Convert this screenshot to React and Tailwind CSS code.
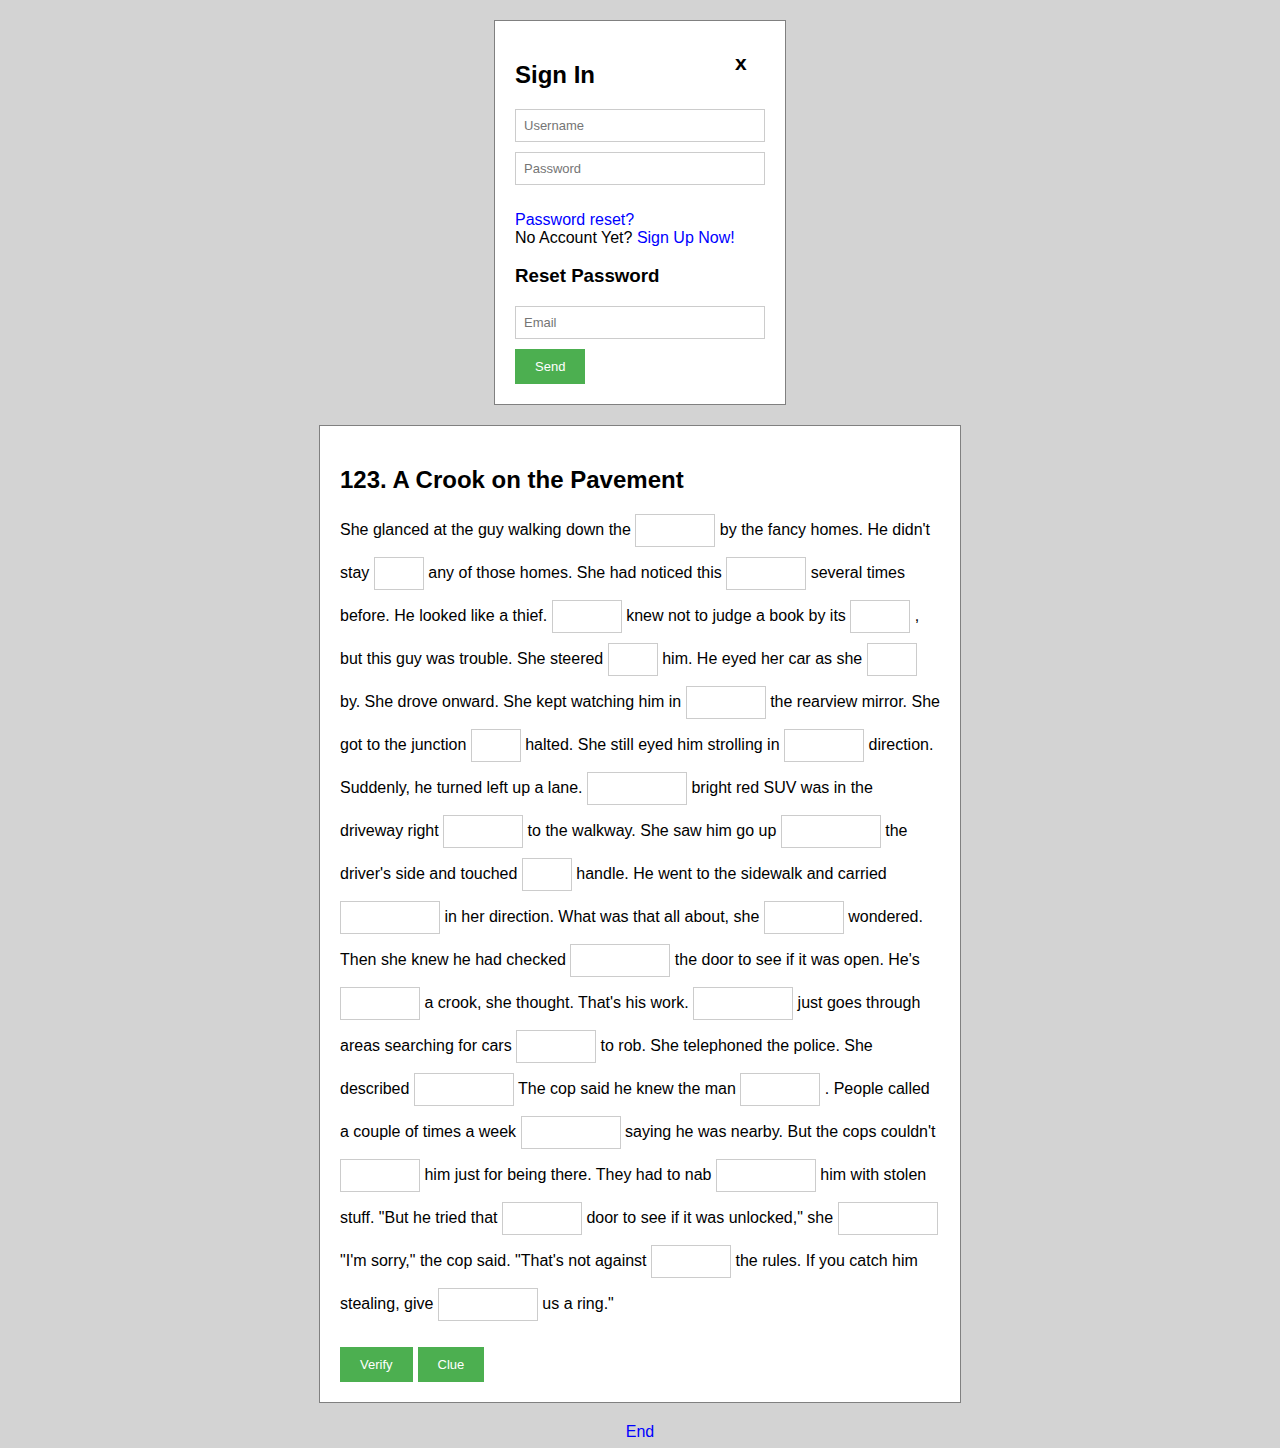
import { Fragment } from 'react';

// texto com lacunas: string = texto, número = largura do campo
const STORY = [
  'She glanced at the guy walking down the', 80,
  'by the fancy homes. He didn\'t stay', 50,
  'any of those homes. She had noticed this', 80,
  'several times before. He looked like a thief.', 70,
  'knew not to judge a book by its', 60,
  ', but this guy was trouble. She steered', 50,
  'him. He eyed her car as she', 50,
  'by. She drove onward. She kept watching him in', 80,
  'the rearview mirror. She got to the junction', 50,
  'halted. She still eyed him strolling in', 80,
  'direction. Suddenly, he turned left up a lane.', 100,
  'bright red SUV was in the driveway right', 80,
  'to the walkway. She saw him go up', 100,
  'the driver\'s side and touched', 50,
  'handle. He went to the sidewalk and carried', 100,
  'in her direction. What was that all about, she', 80,
  'wondered. Then she knew he had checked', 100,
  'the door to see if it was open. He\'s', 80,
  'a crook, she thought. That\'s his work.', 100,
  'just goes through areas searching for cars', 80,
  'to rob. She telephoned the police. She described', 100,
  'The cop said he knew the man', 80,
  '. People called a couple of times a week', 100,
  'saying he was nearby. But the cops couldn\'t', 80,
  'him just for being there. They had to nab', 100,
  'him with stolen stuff. "But he tried that', 80,
  'door to see if it was unlocked," she', 100,
  '"I\'m sorry," the cop said. "That\'s not against', 80,
  'the rules. If you catch him stealing, give', 100,
  'us a ring."',
];

const WIDTHS = {
  50: 'w-[50px]',
  60: 'w-[60px]',
  70: 'w-[70px]',
  80: 'w-[80px]',
  100: 'w-[100px]',
};

function Field({ placeholder }) {
  return (
    <input
      placeholder={placeholder}
      className="block w-[250px] h-[33px] border border-[#cccccc] bg-white px-[8px] text-[13px] text-black placeholder:text-[#757575] outline-none"
    />
  );
}

function GreenButton({ children }) {
  return (
    <button className="inline-block h-[35px] px-[20px] bg-[#4caf50] text-white text-[13px] align-middle">
      {children}
    </button>
  );
}

// ─── Caixa de login ─────────────────────────────────────────────────────────

function SignIn() {
  return (
    <div className="relative w-[292px] mx-auto bg-white border border-[#808080] p-[20px]">
      <span className="absolute left-[240px] top-[30px] text-[21px] font-bold leading-[24px]">x</span>
      <h2 className="mt-[20px] mb-[20px] text-[24px] leading-[28px] font-bold">Sign In</h2>
      <Field placeholder="Username" />
      <div className="h-[10px]" />
      <Field placeholder="Password" />
      <div className="mt-[26px] text-[16px] leading-[18px]">
        <a className="text-[#0000ff]">Password reset?</a>
        <br />
        No Account Yet? <a className="text-[#0000ff]">Sign Up Now!</a>
      </div>
      <h3 className="mt-[18px] mb-[19px] text-[18.72px] leading-[22px] font-bold">Reset Password</h3>
      <Field placeholder="Email" />
      <div className="mt-[10px] h-[35px]">
        <GreenButton>Send</GreenButton>
      </div>
    </div>
  );
}

// ─── Exercício ──────────────────────────────────────────────────────────────

function Story() {
  return (
    <div className="w-[642px] mx-auto mt-[20px] bg-white border border-[#808080] p-[20px]">
      <h2 className="mt-[20px] mb-[14px] text-[24px] leading-[28px] font-bold">123. A Crook on the Pavement</h2>
      <p className="text-[16px] leading-[43px]">
        {STORY.map((item, i) =>
          typeof item === 'number' ? (
            <Fragment key={i}>
              {' '}
              <input className={`inline-block ${WIDTHS[item]} h-[33px] border border-[#cccccc] bg-white align-middle outline-none`} />{' '}
            </Fragment>
          ) : (
            <Fragment key={i}>{item}</Fragment>
          )
        )}
      </p>
      <div className="mt-[22px] flex gap-[5px]">
        <GreenButton>Verify</GreenButton>
        <GreenButton>Clue</GreenButton>
      </div>
    </div>
  );
}

export default function App() {
  return (
    <div className="min-h-[1448px] bg-[#d3d3d3] pt-[20px] pb-[7px] text-black font-['Liberation_Sans',Arial,sans-serif]">
      <SignIn />
      <Story />
      <div className="mt-[20px] text-center text-[16px] leading-[18px]">
        <a className="text-[#0000ff]">End</a>
      </div>
    </div>
  );
}
